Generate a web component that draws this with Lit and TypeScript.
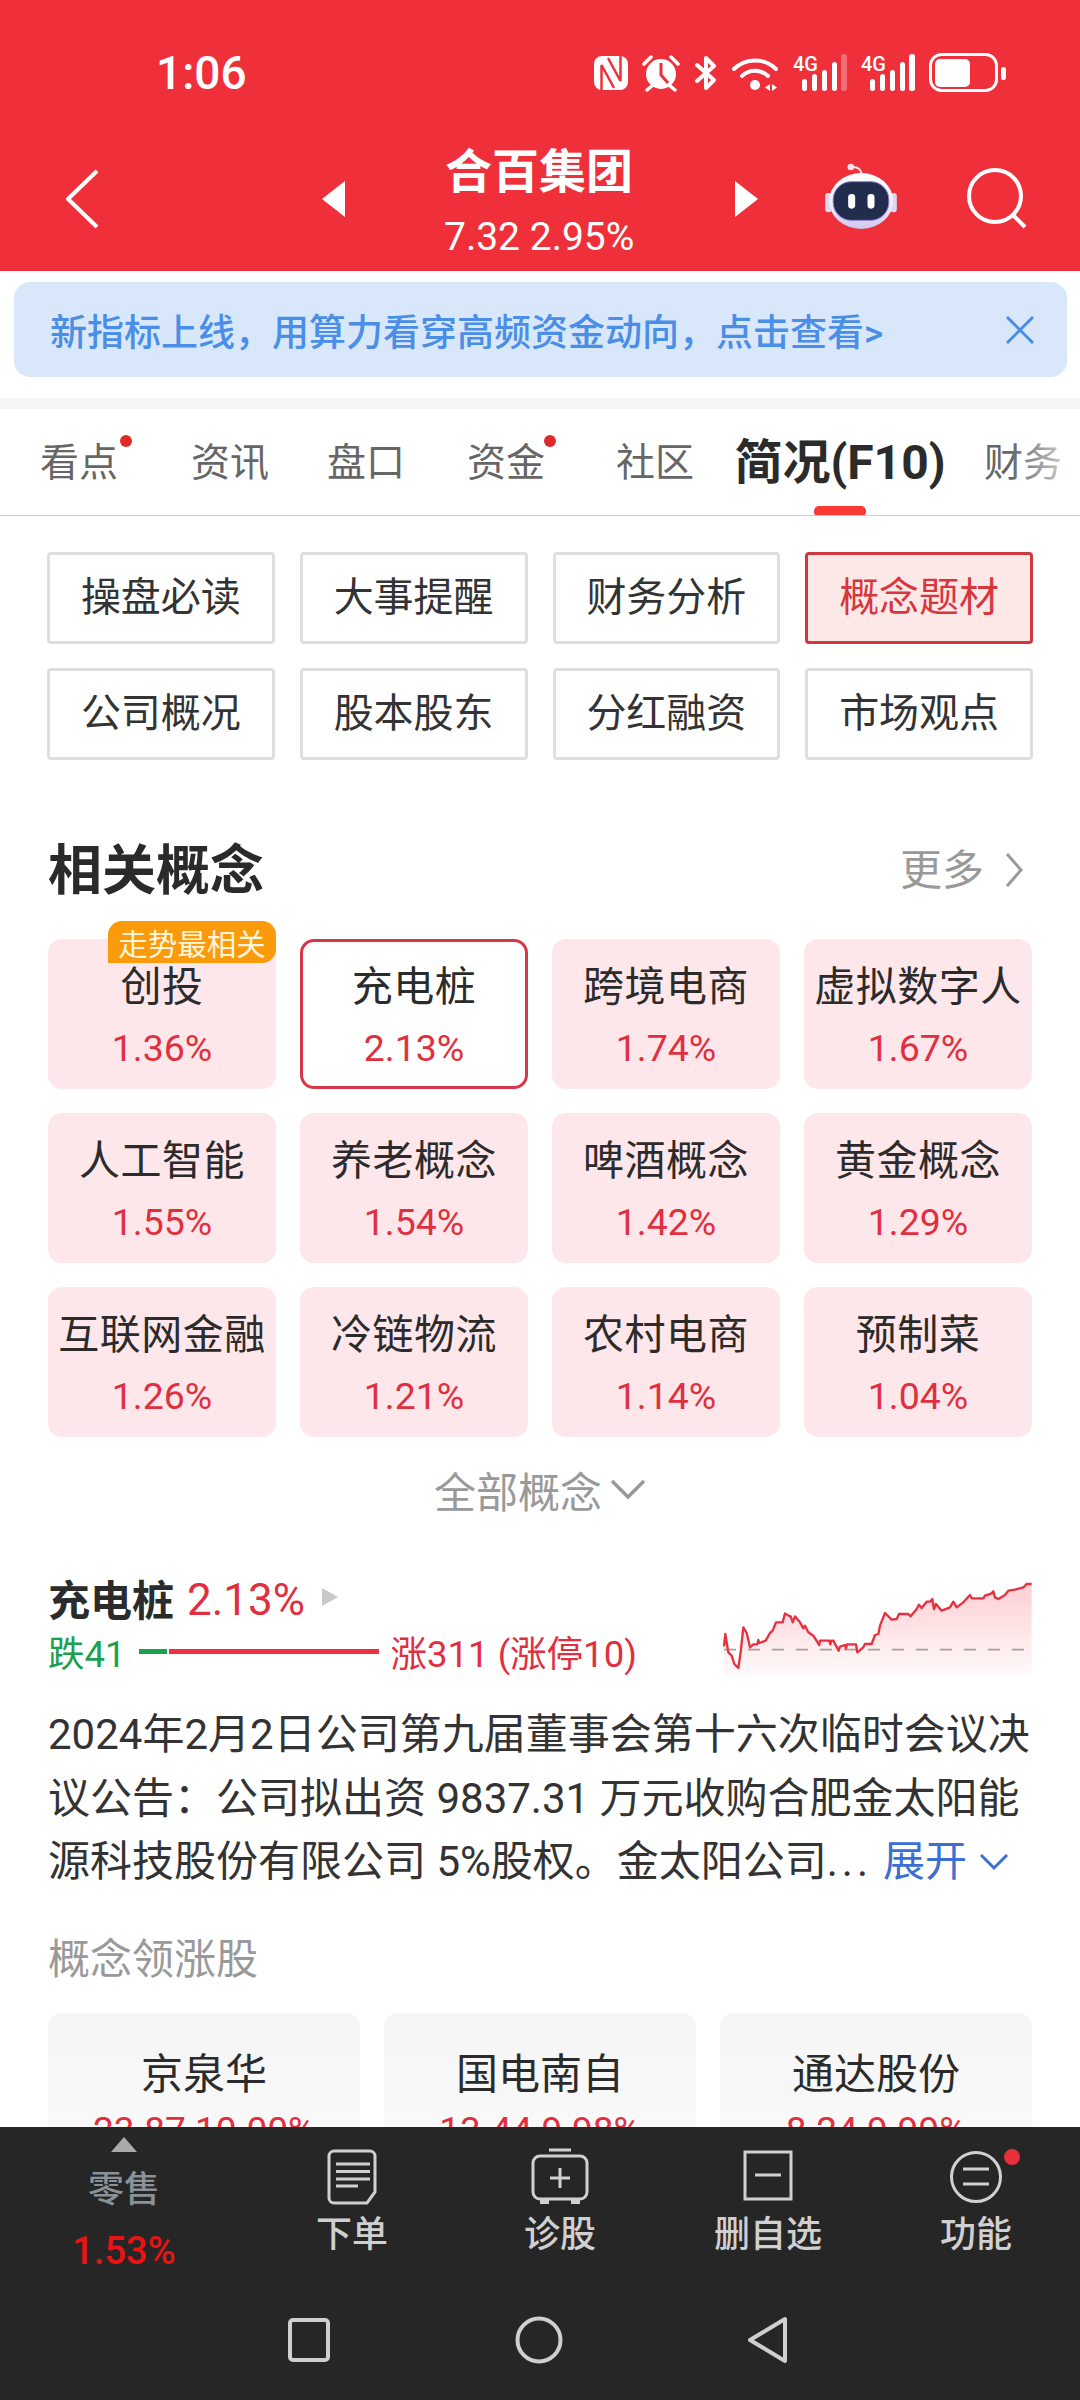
import { LitElement, html, css, svg } from 'lit';
import { customElement } from 'lit/decorators.js';
import { classMap } from 'lit/directives/class-map.js';

const TABS = [
  { label: '看点', dot: true },
  { label: '资讯' },
  { label: '盘口' },
  { label: '资金', dot: true },
  { label: '社区' },
  { label: '简况(F10)', active: true },
  { label: '财务' },
];

const SUB_TABS = ['操盘必读', '大事提醒', '财务分析', '概念题材', '公司概况', '股本股东', '分红融资', '市场观点'];

const CONCEPTS = [
  { name: '创投', pct: '1.36%', badge: '走势最相关' },
  { name: '充电桩', pct: '2.13%', selected: true },
  { name: '跨境电商', pct: '1.74%' },
  { name: '虚拟数字人', pct: '1.67%' },
  { name: '人工智能', pct: '1.55%' },
  { name: '养老概念', pct: '1.54%' },
  { name: '啤酒概念', pct: '1.42%' },
  { name: '黄金概念', pct: '1.29%' },
  { name: '互联网金融', pct: '1.26%' },
  { name: '冷链物流', pct: '1.21%' },
  { name: '农村电商', pct: '1.14%' },
  { name: '预制菜', pct: '1.04%' },
];

const LEADERS = [
  { name: '京泉华', val: '23.87 10.00%' },
  { name: '国电南自', val: '13.44 9.98%' },
  { name: '通达股份', val: '8.24 9.99%' },
];

// traced from the sparkline, units are 1/3 px
const SPARK: [number, number][] = [
  [72, 262], [76, 225], [85, 280], [95, 290], [103, 315], [115, 327], [122, 280], [130, 205], [140, 222], [150, 265],
  [160, 256], [172, 256], [175, 243], [178, 252], [197, 245], [210, 222], [218, 215], [228, 190], [248, 190], [255, 163],
  [265, 170], [272, 172], [278, 190], [285, 172], [300, 190], [310, 208], [315, 200], [325, 220], [340, 230], [358, 258],
  [360, 245], [388, 245], [391, 256], [394, 245], [400, 245], [416, 275], [420, 263], [435, 258], [438, 268], [441, 256],
  [468, 256], [472, 280], [490, 265], [495, 255], [515, 255], [525, 228], [535, 225], [540, 200], [555, 162], [575, 182],
  [590, 180], [597, 165], [625, 165], [632, 172], [650, 150], [657, 137], [665, 147], [680, 128], [690, 128], [697, 120],
  [702, 150], [708, 135], [725, 155], [750, 145], [760, 128], [770, 145], [790, 130], [810, 108], [815, 118], [850, 118],
  [855, 110], [875, 103], [880, 97], [885, 115], [895, 120], [915, 108], [925, 95], [945, 92], [970, 85], [980, 75], [995, 75],
];

@customElement('app-root')
export class AppRoot extends LitElement {
  static styles = css`
    :host {
      display: flex;
      flex-direction: column;
      width: 1080px;
      height: 2400px;
      overflow: hidden;
      background: #fff;
      font-family: Roboto, "Noto Sans CJK SC", sans-serif;
      color: #2b2b2b;
    }
    svg {
      display: block;
      flex: none;
    }

    /* red header */
    .header {
      flex: none;
      height: 271px;
      background: #ef303a;
      color: #fff;
    }
    .status {
      height: 146px;
      display: flex;
      align-items: center;
      padding: 0 74px 0 156px;
    }
    .time {
      font-size: 46px;
      font-weight: 500;
    }
    .status-icons {
      margin-left: auto;
      display: flex;
      align-items: center;
      gap: 14px;
    }
    .signal-text {
      font-family: Roboto, sans-serif;
      font-size: 20px;
      font-weight: 500;
      fill: #fff;
    }
    .nav {
      height: 125px;
      display: flex;
      align-items: center;
    }
    .ic {
      margin-bottom: 19px;
    }
    .back {
      margin-left: 64px;
    }
    .tri-left {
      margin-left: 222px;
    }
    .title {
      width: 190px;
      margin: 0 101px 8px 99px;
      text-align: center;
      white-space: nowrap;
    }
    .title .name {
      font-size: 47px;
      font-weight: 700;
      line-height: 60px;
    }
    .title .sub {
      margin-top: 5px;
      font-size: 39px;
      line-height: 60px;
    }
    .robot {
      margin-left: 62px;
      margin-bottom: 24px;
    }
    .search {
      margin-left: 65px;
    }

    .main {
      flex: 1;
      min-height: 0;
      overflow: hidden;
    }

    .banner {
      height: 95px;
      margin: 11px 13px 21px 14px;
      padding: 0 32px 0 36px;
      display: flex;
      align-items: center;
      justify-content: space-between;
      background: #d8e8fa;
      border-radius: 16px;
      color: #4a8ee8;
      font-size: 37px;
      font-weight: 500;
    }
    .gap {
      height: 11px;
      background: #f5f5f5;
    }

    /* tabs */
    .tabs {
      height: 106px;
      display: grid;
      grid-template-columns: 158px 144px 128px 152px 146px 224px 142px;
      border-bottom: 1px solid #cfcfcf;
      overflow: hidden;
      position: relative;
    }
    .tab {
      position: relative;
      text-align: center;
      font-size: 39px;
      line-height: 108px;
      color: #666;
      white-space: nowrap;
    }
    .tab.active {
      font-size: 48px;
      font-weight: 700;
      color: #2b2b2b;
    }
    .tab.active::after {
      content: '';
      position: absolute;
      left: 86px;
      bottom: 0;
      width: 52px;
      height: 11px;
      border-radius: 5px;
      background: #fa3a32;
    }
    .tab .dot {
      position: absolute;
      top: 26px;
      right: 26px;
      width: 12px;
      height: 12px;
      border-radius: 50%;
      background: #e02a2a;
    }
    .tabs .fade {
      position: absolute;
      top: 0;
      right: 0;
      width: 70px;
      height: 100%;
      background: linear-gradient(to right, rgba(255, 255, 255, 0), rgba(255, 255, 255, 0.85));
    }

    .sub-tabs {
      margin: 36px 47px 0;
      display: grid;
      grid-template-columns: repeat(4, 1fr);
      gap: 24px 25px;
    }
    .sub-tab {
      height: 92px;
      box-sizing: border-box;
      padding-bottom: 9px;
      display: flex;
      align-items: center;
      justify-content: center;
      border: 3px solid #dedede;
      border-radius: 4px;
      font-size: 40px;
      color: #333;
    }
    .sub-tab.active {
      border-color: #d1383e;
      background: #fde8e8;
      color: #d7363d;
    }

    .section-head {
      height: 70px;
      margin: 71px 48px 0;
      display: flex;
      align-items: center;
      justify-content: space-between;
    }
    .section-head h2 {
      margin: 0;
      font-size: 54px;
      font-weight: 700;
      color: #2a2a2a;
    }
    .more {
      display: flex;
      align-items: center;
      gap: 20px;
      font-size: 42px;
      color: #999;
      margin-right: 8px;
    }
    .more svg {
      margin-top: 8px;
    }

    .concepts {
      margin: 38px 48px 0;
      display: grid;
      grid-template-columns: repeat(4, 1fr);
      gap: 24px;
    }
    .concept {
      position: relative;
      height: 150px;
      box-sizing: border-box;
      display: flex;
      flex-direction: column;
      align-items: center;
      background: #fee7ea;
      border-radius: 14px;
      padding-top: 23px;
    }
    .concept.selected {
      background: #fff;
      border: 3px solid #d8374a;
      padding-top: 20px;
    }
    .concept .name {
      font-size: 41px;
      line-height: 50px;
      color: #2b2b2b;
      white-space: nowrap;
      letter-spacing: 0.5px;
    }
    .concept .pct {
      margin-top: 14px;
      font-size: 37.5px;
      line-height: 44px;
      color: #e0303f;
    }
    .badge {
      position: absolute;
      top: -18px;
      right: 0;
      width: 168px;
      height: 42px;
      display: flex;
      align-items: center;
      justify-content: center;
      background: #fb9a0a;
      border-radius: 14px 14px 14px 0;
      font-size: 29.5px;
      color: #fff6dc;
      white-space: nowrap;
    }

    .all {
      height: 60px;
      margin-top: 22px;
      display: flex;
      align-items: center;
      justify-content: center;
      gap: 8px;
      font-size: 42px;
      color: #999;
    }

    .detail {
      height: 108px;
      margin: 48px 48px 0;
      display: flex;
      justify-content: space-between;
    }
    .detail-name {
      height: 60px;
      display: flex;
      align-items: center;
      font-size: 42px;
      font-weight: 700;
    }
    .detail-pct {
      margin-left: 13px;
      padding-top: 6px;
      font-size: 44px;
      font-weight: 400;
      color: #e0303f;
    }
    .detail-name svg {
      margin-left: 16px;
    }
    .breadth {
      height: 48px;
      display: flex;
      align-items: center;
      font-size: 36.5px;
      white-space: nowrap;
    }
    .fall {
      color: #1aa04f;
    }
    .rise {
      color: #e0303f;
    }
    .bar-fall {
      width: 28px;
      height: 5px;
      margin-left: 13px;
      background: #1aa04f;
    }
    .bar-rise {
      width: 210px;
      height: 5px;
      margin: 0 12px 0 2px;
      background: #ef303f;
    }

    .desc {
      margin: 28px 48px 0 48px;
      font-size: 42px;
      line-height: 63.5px;
      color: #333;
      white-space: nowrap;
    }
    .desc .line {
      display: flex;
      align-items: center;
    }
    .dots {
      letter-spacing: 4px;
    }
    .expand {
      margin-left: 11px;
      color: #3b6fd4;
    }
    .expand-icon {
      margin-left: 12px;
    }

    .leaders-title {
      height: 60px;
      margin: 32px 48px 0;
      display: flex;
      align-items: center;
      font-size: 42px;
      color: #999;
    }
    .leaders {
      margin: 27px 48px 0;
      display: grid;
      grid-template-columns: repeat(3, 1fr);
      gap: 24px;
    }
    .leader {
      height: 180px;
      padding-top: 37px;
      box-sizing: border-box;
      text-align: center;
      border-radius: 14px;
      background: linear-gradient(#f5f5f5, #fbfbfb);
    }
    .leader .name {
      font-size: 42px;
      line-height: 50px;
    }
    .leader .val {
      margin-top: 9px;
      font-size: 37px;
      line-height: 44px;
      color: #e0303f;
    }

    /* bottom toolbar */
    .footer {
      flex: none;
      height: 273px;
      background: #262626;
    }
    .actions {
      height: 170px;
      display: grid;
      grid-template-columns: 244px 216px 200px 216px 200px;
    }
    .action {
      position: relative;
      display: flex;
      flex-direction: column;
      align-items: center;
      padding-top: 21px;
      font-size: 36px;
      font-weight: 500;
      line-height: 44px;
      color: #d0d0d0;
    }
    .action .label {
      margin-top: 7px;
    }
    .action .red-dot {
      position: absolute;
      top: 22px;
      left: 128px;
      width: 16px;
      height: 16px;
      border-radius: 50%;
      background: #e8303a;
    }
    .quote {
      display: flex;
      flex-direction: column;
      align-items: center;
      padding: 10px 0 0 4px;
      line-height: 44px;
    }
    .quote .up {
      width: 0;
      height: 0;
      border-left: 13px solid transparent;
      border-right: 13px solid transparent;
      border-bottom: 15px solid #aaa;
    }
    .quote .sector {
      margin-top: 16px;
      font-size: 36px;
      font-weight: 500;
      color: #8a9197;
    }
    .quote .chg {
      margin-top: 17px;
      font-size: 38px;
      font-weight: 500;
      color: #e81414;
    }
    .sysnav {
      height: 86px;
      padding-left: 287px;
      display: flex;
      align-items: center;
      gap: 184px;
    }
  `;

  private renderStatusIcons() {
    const signal = (fade: boolean) => html`
      <svg width="54" height="50" viewBox="0 -6 54 50" fill="#fff">
        <text class="signal-text" x="0" y="17">4G</text>
        <rect x="9" y="25" width="5" height="12" rx="2.5" />
        <rect x="19" y="20" width="5" height="17" rx="2.5" />
        <rect x="29" y="16" width="5" height="21" rx="2.5" />
        <rect x="39" y="8" width="5" height="29" rx="2.5" />
        <rect x="48" y="0" width="6" height="37" rx="2.5" opacity=${fade ? 0.3 : 1} />
      </svg>
    `;
    return html`
      <div class="status-icons">
        <svg width="34" height="36" viewBox="0 0 34 36">
          <rect x="0" y="1" width="34" height="34" rx="8" fill="#fff" />
          <path d="M7.500 35V10L20 33M26.500 1V26L14 3" fill="none" stroke="#ef303a" stroke-width="2.500" />
        </svg>
        <svg width="38" height="38" viewBox="0 0 38 38">
          <circle cx="19" cy="20" r="15" fill="#fff" />
          <path d="M19 9v12l7 8" fill="none" stroke="#ef303a" stroke-width="3" />
          <path d="M2 10l7-7M36 10l-7-7M5 36l6-5M33 36l-6-5" fill="none" stroke="#fff" stroke-width="3.500" stroke-linecap="round" />
        </svg>
        <svg width="24" height="36" viewBox="0 0 24 36">
          <path d="M3 10l17 15-8 8V3l8 8L3 26" fill="none" stroke="#fff" stroke-width="4" stroke-linejoin="round" stroke-linecap="round" />
        </svg>
        <svg width="47" height="36" viewBox="0 0 47 36">
          <path d="M2 14A30 30 0 0 1 44 14M10 21A19 19 0 0 1 36 21" fill="none" stroke="#fff" stroke-width="4" stroke-linecap="round" />
          <circle cx="23" cy="30" r="5" fill="#fff" />
          <path d="M38 29v7l-5-3.500zM40 29v7l5-3.500z" fill="#fff" />
        </svg>
        ${signal(true)} ${signal(false)}
        <svg width="77" height="40" viewBox="0 0 77 40">
          <rect x="1.500" y="1.500" width="66" height="36" rx="11" fill="none" stroke="#fff" stroke-width="3" />
          <rect x="6" y="6" width="35" height="28" rx="5" fill="#fff" />
          <rect x="72" y="14" width="5" height="13" rx="2.500" fill="#fff" />
        </svg>
      </div>
    `;
  }

  private renderRobot() {
    return html`
      <svg class="robot" width="82" height="70" viewBox="750 395 245 210">
        <defs>
          <linearGradient id="shell" x1="0" y1="0" x2="0" y2="1">
            <stop offset="0" stop-color="#ffffff" />
            <stop offset="0.6" stop-color="#eeeaf9" />
            <stop offset="1" stop-color="#cfc8ee" />
          </linearGradient>
        </defs>
        <circle cx="842" cy="410" r="10" fill="#f4e4ea" />
        <path d="M848 410q24 0 26 22" fill="none" stroke="#f4e4ea" stroke-width="6" />
        <rect x="765" y="488" width="20" height="58" rx="9" fill="#dcd7f3" />
        <rect x="960" y="488" width="20" height="58" rx="9" fill="#dcd7f3" />
        <ellipse cx="873" cy="512" rx="96" ry="84" fill="url(#shell)" />
        <rect x="789" y="454" width="167" height="116" rx="54" fill="#222c4c" stroke="#8d7fe0" stroke-width="3" />
        <rect x="834" y="491" width="21" height="44" rx="10" fill="#fff" />
        <rect x="892" y="491" width="21" height="44" rx="10" fill="#fff" />
      </svg>
    `;
  }

  private renderSpark() {
    const pts = SPARK.map(p => p.join(',')).join(' ');
    return html`
      <svg width="312" height="108" viewBox="60 24 936 324">
        <defs>
          <linearGradient id="area" gradientUnits="userSpaceOnUse" x1="0" y1="75" x2="0" y2="350">
            <stop offset="0" stop-color="#fdcfd4" />
            <stop offset="1" stop-color="#fffafa" />
          </linearGradient>
        </defs>
        ${svg`<polygon points="72,350 ${pts} 995,350" fill="url(#area)" />`}
        <line x1="72" y1="272" x2="972" y2="272" stroke="#a9a0a2" stroke-width="5" stroke-dasharray="36 36" />
        ${svg`<polyline points=${pts} fill="none" stroke="#e8303f" stroke-width="7" stroke-linejoin="round" />`}
      </svg>
    `;
  }

  render() {
    return html`
      <div class="header">
        <div class="status">
          <span class="time">1:06</span>
          ${this.renderStatusIcons()}
        </div>
        <div class="nav">
          <svg class="ic back" width="36" height="60" viewBox="0 0 36 60">
            <path d="M33 2L4 30l29 28" fill="none" stroke="#fff" stroke-width="4" stroke-linejoin="round" />
          </svg>
          <svg class="ic tri-left" width="23" height="36" viewBox="0 0 23 36"><path d="M23 0v36L0 18z" fill="#fff" /></svg>
          <div class="title">
            <div class="name">合百集团</div>
            <div class="sub">7.32 2.95%</div>
          </div>
          <svg class="ic" width="23" height="36" viewBox="0 0 23 36"><path d="M0 0v36l23-18z" fill="#fff" /></svg>
          ${this.renderRobot()}
          <svg class="ic search" width="62" height="62" viewBox="0 0 62 62">
            <circle cx="28" cy="28" r="26" fill="none" stroke="#fff" stroke-width="4" />
            <path d="M46 47l12 12" fill="none" stroke="#fff" stroke-width="4" />
          </svg>
        </div>
      </div>

      <div class="main">
        <div class="banner">
          <span>新指标上线，用算力看穿高频资金动向，点击查看&gt;</span>
          <svg width="30" height="28" viewBox="0 0 30 28">
            <path d="M2 1l26 26M28 1L2 27" fill="none" stroke="#4a8ee8" stroke-width="3" />
          </svg>
        </div>
        <div class="gap"></div>

        <div class="tabs">
          ${TABS.map(t => html`
            <div class=${classMap({ tab: true, active: !!t.active })}>
              ${t.label}${t.dot ? html`<span class="dot"></span>` : ''}
            </div>
          `)}
          <div class="fade"></div>
        </div>

        <div class="sub-tabs">
          ${SUB_TABS.map(s => html`
            <div class=${classMap({ 'sub-tab': true, active: s === '概念题材' })}>${s}</div>
          `)}
        </div>

        <div class="section-head">
          <h2>相关概念</h2>
          <div class="more">
            更多
            <svg width="20" height="36" viewBox="0 0 20 36">
              <path d="M3 2l14 16L3 34" fill="none" stroke="#999" stroke-width="3" />
            </svg>
          </div>
        </div>

        <div class="concepts">
          ${CONCEPTS.map(c => html`
            <div class=${classMap({ concept: true, selected: !!c.selected })}>
              ${c.badge ? html`<span class="badge">${c.badge}</span>` : ''}
              <div class="name">${c.name}</div>
              <div class="pct">${c.pct}</div>
            </div>
          `)}
        </div>

        <div class="all">
          全部概念
          <svg width="36" height="22" viewBox="0 0 36 22">
            <path d="M2 3l16 16L34 3" fill="none" stroke="#999" stroke-width="3.500" />
          </svg>
        </div>

        <div class="detail">
          <div>
            <div class="detail-name">
              充电桩<span class="detail-pct">2.13%</span>
              <svg width="18" height="18" viewBox="0 0 18 18"><path d="M1 0v18l16-9z" fill="#c9c9c9" /></svg>
            </div>
            <div class="breadth">
              <span class="fall">跌41</span>
              <span class="bar-fall"></span>
              <span class="bar-rise"></span>
              <span class="rise">涨311 (涨停10)</span>
            </div>
          </div>
          ${this.renderSpark()}
        </div>

        <div class="desc">
          <div class="line">2024年2月2日公司第九届董事会第十六次临时会议决</div>
          <div class="line">议公告：公司拟出资 9837.31 万元收购合肥金太阳能</div>
          <div class="line">
            源科技股份有限公司 5%股权。金太阳公司<span class="dots">...</span>
            <span class="expand">展开</span>
            <svg class="expand-icon" width="30" height="18" viewBox="0 0 30 18">
              <path d="M2 2l13 13L28 2" fill="none" stroke="#3b6fd4" stroke-width="3" />
            </svg>
          </div>
        </div>

        <div class="leaders-title">概念领涨股</div>
        <div class="leaders">
          ${LEADERS.map(l => html`
            <div class="leader">
              <div class="name">${l.name}</div>
              <div class="val">${l.val}</div>
            </div>
          `)}
        </div>
      </div>

      <div class="footer">
        <div class="actions">
          <div class="quote">
            <span class="up"></span>
            <span class="sector">零售</span>
            <span class="chg">1.53%</span>
          </div>
          <div class="action">
            <svg width="52" height="58" viewBox="0 0 52 58">
              <path d="M8 3h36a5 5 0 0 1 5 5v36l-8 11H8a5 5 0 0 1-5-5V8a5 5 0 0 1 5-5z" fill="none" stroke="#d0d0d0" stroke-width="3" />
              <path d="M10 16h34M10 23.500h34M10 31h34M10 38h22" fill="none" stroke="#d0d0d0" stroke-width="3" />
            </svg>
            <span class="label">下单</span>
          </div>
          <div class="action">
            <svg width="60" height="58" viewBox="0 0 60 58">
              <rect x="3" y="8" width="54" height="43" rx="7" fill="none" stroke="#d0d0d0" stroke-width="3" />
              <path d="M19 2h22M30 20v20M20 30h20" fill="none" stroke="#d0d0d0" stroke-width="3" />
              <path d="M10 51h9v5h-9zM41 51h9v5h-9z" fill="#d0d0d0" />
            </svg>
            <span class="label">诊股</span>
          </div>
          <div class="action">
            <svg width="52" height="58" viewBox="0 0 52 58">
              <rect x="3" y="4" width="46" height="47" fill="none" stroke="#d0d0d0" stroke-width="3" />
              <path d="M13 27h26" fill="none" stroke="#d0d0d0" stroke-width="3" />
            </svg>
            <span class="label">删自选</span>
          </div>
          <div class="action">
            <svg width="54" height="58" viewBox="0 0 54 58">
              <circle cx="27" cy="29" r="24.500" fill="none" stroke="#d0d0d0" stroke-width="3" />
              <path d="M14 21h26M14 36h26" fill="none" stroke="#d0d0d0" stroke-width="3" />
            </svg>
            <span class="label">功能</span>
            <span class="red-dot"></span>
          </div>
        </div>
        <div class="sysnav">
          <svg width="44" height="46" viewBox="0 0 44 46">
            <rect x="3" y="3" width="38" height="40" rx="3" fill="none" stroke="#cfcfcf" stroke-width="4" />
          </svg>
          <svg width="48" height="48" viewBox="0 0 48 48">
            <circle cx="24" cy="24" r="21.500" fill="none" stroke="#cfcfcf" stroke-width="4" />
          </svg>
          <svg width="42" height="48" viewBox="0 0 42 48">
            <path d="M38 3v42L3 24z" fill="none" stroke="#cfcfcf" stroke-width="4" stroke-linejoin="round" />
          </svg>
        </div>
      </div>
    `;
  }
}
